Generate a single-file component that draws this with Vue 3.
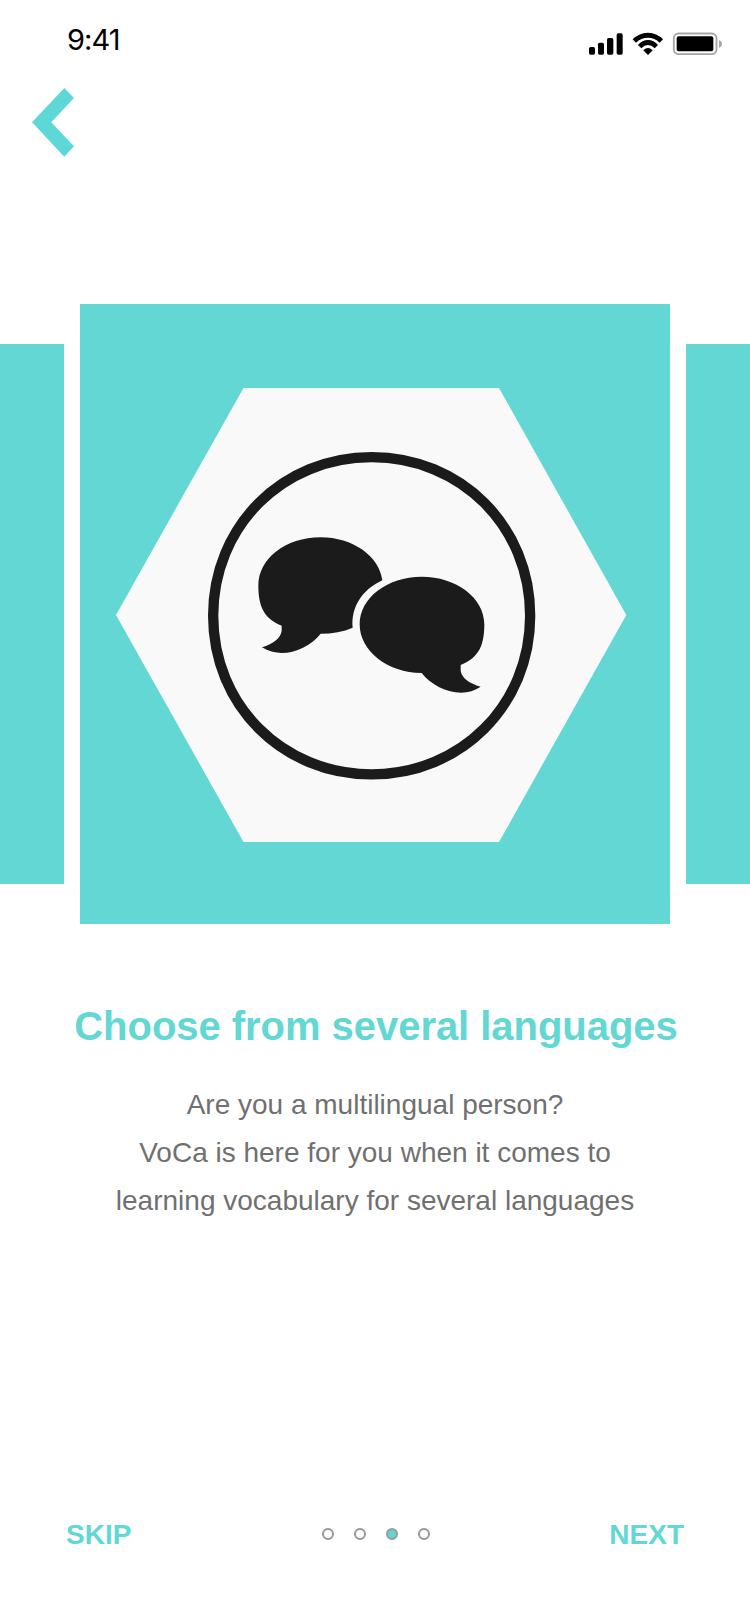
<script setup>
const slides = [0, 1, 2, 3]
const active = 2
const lines = [
  'Are you a multilingual person?',
  'VoCa is here for you when it comes to',
  'learning vocabulary for several languages',
]
</script>

<template>
  <main class="screen">
    <header class="status">
      <span class="time">9:41</span>
      <svg class="indicators" width="136" height="26" viewBox="588 31 136 26">
        <g transform="translate(570 20) scale(.33333)">
          <rect x="57" y="81" width="18" height="23" rx="5" />
          <rect x="84" y="68" width="18" height="36" rx="5" />
          <rect x="111" y="54" width="19" height="50" rx="5" />
          <rect x="140" y="40" width="18" height="64" rx="5" />
          <path d="M188 58Q208 38 234 38Q260 38 279 58L269 68Q254 53 234 53Q213 53 198 68Z" />
          <path d="M204 75Q217 60 234 60Q251 60 264 75L254 85Q245 75 234 75Q223 75 214 85Z" />
          <path d="M220 91Q234 77 248 91L234 105Z" />
          <rect x="311.5" y="40.500" width="128" height="62" rx="14" fill="none" stroke="#a6a6a6" stroke-width="5.500" />
          <rect x="320" y="49" width="110" height="45" rx="6" />
          <path d="M447 61Q456 64 456 72Q456 80 447 83Z" fill="#a6a6a6" />
        </g>
      </svg>
    </header>

    <nav class="topnav">
      <button class="back" aria-label="Back">
        <svg width="42" height="69" viewBox="0 0 42 69">
          <path d="M32.300 0L42 10L19.300 34.300L42 58.300L32.300 68.700L0 34.300Z" fill="#5ed8d6" />
        </svg>
      </button>
    </nav>

    <section class="carousel">
      <div class="peek"></div>
      <div class="card">
        <svg width="590" height="620" viewBox="80 304 590 620">
          <path d="M243.500 388H499L626.300 615L499 842H243.500L116 615Z" fill="#f9f9f9" />
          <g transform="translate(190 430) scale(.33333)" fill="#1b1b1b">
            <path
              d="M545 81.500C813 81.500 1020.500 289 1020.500 557.500C1020.500 825 813 1033 545 1033C277 1033 69.500 825 69.500 557.500C69.500 289 277 81.500 545 81.500Z"
              fill="none" stroke="#1b1b1b" stroke-width="31" />
            <path d="M577 451C568 378 488 322 392 322C286 322 205 387 205 467C205 540 230 568 275 587V602C272 625 250 641 216 652C234 664 255 669 275 669C318 669 364 646 392 611C428 611 460 605 488 593C483 532 515 480 577 451Z" />
            <path d="M509 583C509 504 591 440 695 440C798 440 883 503 883 583C883 658 858 686 812 705V722C815 744 838 760 872 770C855 782 835 788 813 788C770 788 722 764 695 729C592 729 509 662 509 583Z" />
          </g>
        </svg>
      </div>
      <div class="peek"></div>
    </section>

    <section class="copy">
      <h1>Choose from several languages</h1>
      <p><span v-for="line in lines" :key="line">{{ line }}</span></p>
    </section>

    <footer class="footer">
      <button class="link">SKIP</button>
      <div class="dots">
        <i v-for="s in slides" :key="s" class="dot" :class="{ on: s === active }"></i>
      </div>
      <button class="link next">NEXT</button>
    </footer>
  </main>
</template>

<style>
body {
  background: #fff;
}
</style>

<style scoped>
.screen {
  width: 750px;
  height: 1624px;
  display: flex;
  flex-direction: column;
  overflow: hidden;
  background: #fff;
  font-family: "Liberation Sans", Arial, sans-serif;
}
.status {
  flex: none;
  height: 88px;
  box-sizing: border-box;
  padding: 22px 26px 0 67px;
  display: flex;
  justify-content: space-between;
  align-items: flex-start;
}
.time {
  font: 400 29px/36px Inter, sans-serif;
  letter-spacing: -0.9px;
  color: #000;
}
.indicators {
  margin-top: 9px;
}
.topnav {
  flex: none;
  height: 216px;
  padding-left: 32px;
}
button {
  display: block;
  margin: 0;
  padding: 0;
  border: 0;
  background: none;
  font-family: inherit;
}
svg {
  display: block;
}
.carousel {
  flex: none;
  display: grid;
  grid-template-columns: 64px 590px 64px;
  column-gap: 16px;
  align-items: center;
  height: 620px;
}
.peek {
  height: 540px;
  background: #62d7d3;
}
.card {
  height: 620px;
  background: #62d7d3;
}
.copy {
  flex: 1;
  padding-top: 79px;
  text-align: center;
}
h1 {
  margin: 0;
  padding-left: 2px;
  font-size: 40px;
  line-height: 46px;
  letter-spacing: -0.04px;
  font-weight: 700;
  color: #62d7d3;
  white-space: nowrap;
}
p {
  margin: 32px 0 0;
  font-size: 28px;
  line-height: 48px;
  color: #707070;
}
p span {
  display: block;
}
.footer {
  flex: none;
  height: 106px;
  padding: 0 66px;
  display: grid;
  grid-template-columns: 1fr auto 1fr;
  align-items: start;
}
.link {
  padding-top: 1px;
  font-size: 28px;
  line-height: 32px;
  font-weight: 700;
  color: #62d7d3;
  text-align: left;
}
.next {
  text-align: right;
}
.dots {
  display: flex;
  gap: 20px;
  padding: 10px 0 0 2px;
}
.dot {
  width: 12px;
  height: 12px;
  box-sizing: border-box;
  border: 2px solid #979797;
  border-radius: 50%;
}
.dot.on {
  background: #5ed8d6;
}
</style>
